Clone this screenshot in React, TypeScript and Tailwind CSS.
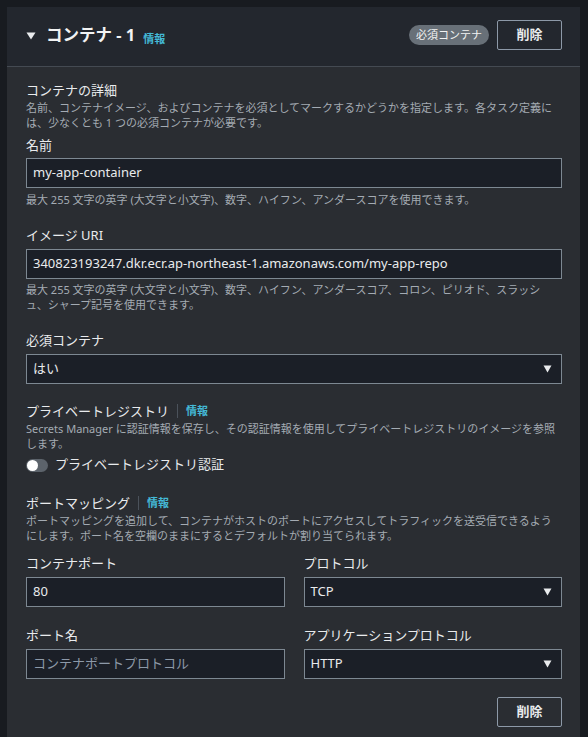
import { ReactNode } from 'react'

const font = { fontFamily: '"Noto Sans", "Noto Sans CJK JP", sans-serif' }

function Info() {
  return <span className="text-[11px] font-bold text-[#44b9d6] leading-[20px]">情報</span>
}

function Label({ children, className = '' }: { children: ReactNode; className?: string }) {
  return <div className={`text-[13px] leading-[20px] text-[#e9ebed] ${className}`}>{children}</div>
}

function Desc({ children, className = '' }: { children: ReactNode; className?: string }) {
  return <div className={`text-[11px] leading-[15px] text-[#a4abb3] ${className}`}>{children}</div>
}

function Input({ value, placeholder, className = '' }: { value?: string; placeholder?: string; className?: string }) {
  return (
    <div className={`h-[30px] flex items-center px-[6px] bg-[#1b1f27] border border-[#7d8892] text-[13px] ${className}`}>
      {value ? <span className="text-[#e9ebed]">{value}</span> : <span className="text-[#8d99a8]">{placeholder}</span>}
    </div>
  )
}

function Select({ value, className = '' }: { value: string; className?: string }) {
  return (
    <div className={`h-[30px] flex items-center justify-between pl-[6px] pr-[9px] bg-[#1b1f27] border border-[#7d8892] text-[13px] text-[#e9ebed] ${className}`}>
      <span>{value}</span>
      <svg width="9" height="8" viewBox="0 0 9 8"><path d="M0.5 0.5h8L4.5 7.5z" fill="#e9ebed" /></svg>
    </div>
  )
}

function SectionTitle({ title }: { title: string }) {
  return (
    <div className="flex items-center text-[13px] leading-[20px] text-[#e9ebed]">
      <span>{title}</span>
      <span className="mx-[8px] w-px h-[14px] bg-[#4b525b]" />
      <Info />
    </div>
  )
}

export default function App() {
  return (
    <div className="w-[588px] h-[737px] bg-[#181b20] pt-[7px] pl-[7px] overflow-hidden" style={font}>
      <div className="w-[573px] h-[730px] bg-[#2a2d32]">
        <div className="h-[60px] bg-[#23272e] border-b border-[#444a52] flex items-center pl-[19px] pr-[18px] pb-[3px]">
          <svg width="10" height="8" viewBox="0 0 10 8" className="mt-[2px]"><path d="M0.5 0.5h9L5 7.5z" fill="#e9ebed" /></svg>
          <span className="ml-[10px] text-[16.5px] font-bold text-[#f2f3f3] leading-[24px]">コンテナ - 1</span>
          <span className="ml-[8px] mt-[3px]"><Info /></span>
          <div className="ml-auto flex items-center gap-[8px]">
            <span className="h-[20px] px-[7px] rounded-full bg-[#687078] text-[11px] leading-[20px] text-[#f2f3f3]">必須コンテナ</span>
            <button className="w-[65px] h-[30px] border border-[#8d99a8] rounded-[2px] text-[13px] font-bold text-[#e9ebed]">削除</button>
          </div>
        </div>

        <div className="pl-[19px] pr-[18px] pt-[13px]">
          <Label>コンテナの詳細</Label>
          <Desc>名前、コンテナイメージ、およびコンテナを必須としてマークするかどうかを指定します。各タスク定義には、少なくとも 1 つの必須コンテナが必要です。</Desc>

          <Label className="mt-[5px]">名前</Label>
          <Input className="mt-[3px]" value="my-app-container" />
          <div className="mt-[4px] text-[11px] leading-[16px] text-[#a4abb3]">最大 255 文字の英字 (大文字と小文字)、数字、ハイフン、アンダースコアを使用できます。</div>

          <Label className="mt-[17px]">イメージ URI</Label>
          <Input className="mt-[4px]" value="340823193247.dkr.ecr.ap-northeast-1.amazonaws.com/my-app-repo" />
          <Desc className="mt-[3px] pr-[8px]">最大 255 文字の英字 (大文字と小文字)、数字、ハイフン、アンダースコア、コロン、ピリオド、スラッシュ、シャープ記号を使用できます。</Desc>

          <Label className="mt-[18px]">必須コンテナ</Label>
          <Select className="mt-[4px]" value="はい" />

          <div className="mt-[17px]"><SectionTitle title="プライベートレジストリ" /></div>
          <Desc>Secrets Manager に認証情報を保存し、その認証情報を使用してプライベートレジストリのイメージを参照します。</Desc>
          <div className="mt-[4px] flex items-center h-[20px]">
            <div className="w-[22px] h-[13px] rounded-full bg-[#5c636b] flex items-center pl-[1px]">
              <div className="w-[11px] h-[11px] rounded-full bg-white" />
            </div>
            <span className="ml-[7px] text-[13px] text-[#e9ebed]">プライベートレジストリ認証</span>
          </div>

          <div className="mt-[18px]"><SectionTitle title="ポートマッピング" /></div>
          <Desc>ポートマッピングを追加して、コンテナがホストのポートにアクセスしてトラフィックを送受信できるようにします。ポート名を空欄のままにするとデフォルトが割り当てられます。</Desc>

          <div className="mt-[10px] grid grid-cols-2 gap-x-[19px]">
            <div>
              <Label>コンテナポート</Label>
              <Input className="mt-[4px]" value="80" />
            </div>
            <div>
              <Label>プロトコル</Label>
              <Select className="mt-[4px]" value="TCP" />
            </div>
            <div className="mt-[18px]">
              <Label>ポート名</Label>
              <Input className="mt-[4px]" placeholder="コンテナポートプロトコル" />
            </div>
            <div className="mt-[18px]">
              <Label>アプリケーションプロトコル</Label>
              <Select className="mt-[4px]" value="HTTP" />
            </div>
          </div>

          <div className="mt-[18px] flex justify-end">
            <button className="w-[65px] h-[30px] border border-[#8d99a8] rounded-[2px] text-[13px] font-bold text-[#e9ebed]">削除</button>
          </div>
        </div>
      </div>
    </div>
  )
}
